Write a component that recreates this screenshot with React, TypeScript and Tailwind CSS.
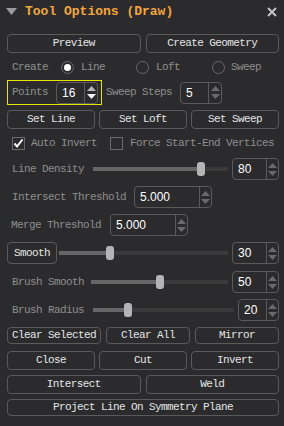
import React from "react";

const mono = "font-['Liberation_Mono','DejaVu_Sans_Mono',monospace] text-[11px] tracking-[-0.6px]";

const Btn = ({ label, className = "" }: { label: string; className?: string }) => (
  <div
    className={`flex items-center justify-center rounded-[4px] border border-[#5a5a5a] text-[#e6e6e6] ${className}`}
  >
    {label}
  </div>
);

const Arrows = ({ w, bright = false }: { w: string; bright?: boolean }) => (
  <div className={`flex h-full flex-col items-center justify-center gap-[3px] border-l border-[#5a5a5a] ${w}`}>
    <svg width="9" height="5" viewBox="0 0 9 5">
      <path d="M0 5 L4.5 0 L9 5 Z" fill={bright ? "#b8b8b8" : "#6a6a6a"} />
    </svg>
    <svg width="9" height="5" viewBox="0 0 9 5">
      <path d="M0 0 L4.5 5 L9 0 Z" fill={bright ? "#f4f4f4" : "#6a6a6a"} />
    </svg>
  </div>
);

const Spin = ({
  value,
  className = "",
  arrowW = "w-[12px]",
  bright = false,
}: {
  value: string;
  className?: string;
  arrowW?: string;
  bright?: boolean;
}) => (
  <div className={`flex h-[22px] items-center rounded-[4px] border border-[#5a5a5a] ${className}`}>
    <div className="flex-1 pl-[5px] font-['Liberation_Sans',sans-serif] text-[12px] tracking-normal text-white">
      {value}
    </div>
    <Arrows w={arrowW} bright={bright} />
  </div>
);

const Slider = ({ pct, className = "" }: { pct: number; className?: string }) => (
  <div className={`relative flex h-[22px] items-center ${className}`}>
    <div className="flex h-[4px] w-full">
      <div className="h-full bg-[#666666]" style={{ width: `${pct}%` }} />
      <div className="h-full flex-1 bg-[#3a3a3a]" />
    </div>
    <div
      className="absolute top-[4px] h-[14px] w-[8px] rounded-[3px] bg-[#b4b4b4]"
      style={{ left: `calc(${pct}% - 4px)` }}
    />
  </div>
);

const Radio = ({ on = false }: { on?: boolean }) => (
  <div className="flex h-[13px] w-[13px] items-center justify-center rounded-full border border-[#6a6a6a]">
    {on && <div className="h-[7px] w-[7px] rounded-full bg-white" />}
  </div>
);

const Check = ({ on = false }: { on?: boolean }) => (
  <div className="flex h-[13px] w-[13px] items-center justify-center border border-[#6a6a6a]">
    {on && (
      <svg width="11" height="11" viewBox="0 0 11 11">
        <path d="M1.5 5.5 L4 8.5 L9.5 1.5" stroke="#ffffff" strokeWidth="2" fill="none" />
      </svg>
    )}
  </div>
);

export default function App() {
  return (
    <div className={`h-[426px] w-[284px] overflow-hidden bg-[#2b2b2d] pl-[7px] pr-[5px] ${mono}`}>
      {/* header */}
      <div className="relative flex h-[24px] items-center">
        <svg width="11" height="8" viewBox="0 0 11 8" className="-ml-[1px]">
          <path d="M0 0 L11 0 L5.5 7 Z" fill="#9c9c9c" />
        </svg>
        <span className="ml-[8px] text-[13px] font-bold tracking-normal text-[#f4a640]">
          Tool Options (Draw)
        </span>
        <svg width="10" height="10" viewBox="0 0 10 10" className="ml-auto mr-[2px]">
          <path d="M1 1 L9 9 M9 1 L1 9" stroke="#c4c4c4" strokeWidth="2" />
        </svg>
      </div>

      <div className="mt-[10px] grid h-[19px] grid-cols-2 gap-[5px]">
        <Btn label="Preview" />
        <Btn label="Create Geometry" />
      </div>

      {/* create */}
      <div className="mt-[7px] flex h-[14px] items-center text-[#8e8e8e]">
        <span className="ml-[5px]">Create</span>
        <div className="ml-[13px]"><Radio on /></div>
        <span className="ml-[7px]">Line</span>
        <div className="ml-[31px]"><Radio /></div>
        <span className="ml-[7px]">Loft</span>
        <div className="ml-[32px]"><Radio /></div>
        <span className="ml-[6px]">Sweep</span>
      </div>

      {/* points */}
      <div className="mt-[6px] flex items-center">
        <div className="flex h-[25px] w-[95px] items-center border border-[#e6e600] pl-[4px] text-[#8e8e8e]">
          <span>Points</span>
          <Spin value="16" className="ml-[8px] h-[21px] w-[42px]" arrowW="w-[13px]" bright />
        </div>
        <span className="ml-[4px] text-[#8e8e8e]">Sweep Steps</span>
        <Spin value="5" className="ml-[8px] h-[21px] w-[42px]" arrowW="w-[13px]" />
      </div>

      <div className="mt-[5px] grid h-[19px] grid-cols-3 gap-[4px]">
        <Btn label="Set Line" />
        <Btn label="Set Loft" />
        <Btn label="Set Sweep" />
      </div>

      {/* checks */}
      <div className="mt-[8px] flex h-[13px] items-center text-[#8e8e8e]">
        <div className="ml-[5px]"><Check on /></div>
        <span className="ml-[6px]">Auto Invert</span>
        <div className="ml-[13px]"><Check /></div>
        <span className="ml-[7px]">Force Start-End Vertices</span>
      </div>

      {/* line density */}
      <div className="mt-[8px] flex items-center text-[#8e8e8e]">
        <span className="w-[86px] pl-[5px]">Line Density</span>
        <Slider pct={80} className="flex-1" />
        <Spin value="80" className="ml-[4px] w-[47px]" />
      </div>

      <div className="mt-[6px] flex items-center text-[#8e8e8e]">
        <span className="w-[127px] pl-[5px]">Intersect Threshold</span>
        <Spin value="5.000" className="w-[78px]" />
      </div>

      <div className="mt-[6px] flex items-center text-[#8e8e8e]">
        <span className="w-[103px] pl-[4px]">Merge Threshold</span>
        <Spin value="5.000" className="w-[78px]" />
      </div>

      <div className="mt-[6px] flex items-center">
        <Btn label="Smooth" className="h-[22px] w-[50px]" />
        <Slider pct={30} className="ml-[2px] flex-1" />
        <Spin value="30" className="ml-[4px] w-[47px]" />
      </div>

      <div className="mt-[7px] flex items-center text-[#8e8e8e]">
        <span className="w-[84px] pl-[5px]">Brush Smooth</span>
        <Slider pct={50} className="flex-1" />
        <Spin value="50" className="ml-[4px] w-[47px]" />
      </div>

      <div className="mt-[6px] flex items-center text-[#8e8e8e]">
        <span className="w-[86px] pl-[5px]">Brush Radius</span>
        <Slider pct={25} className="flex-1" />
        <Spin value="20" className="ml-[4px] w-[41px]" />
      </div>

      <div className="mt-[6px] flex h-[17px] gap-[5px]">
        <Btn label="Clear Selected" className="w-[94px]" />
        <Btn label="Clear All" className="w-[84px]" />
        <Btn label="Mirror" className="flex-1" />
      </div>

      <div className="mt-[7px] grid h-[17px] grid-cols-3 gap-[4px]">
        <Btn label="Close" />
        <Btn label="Cut" />
        <Btn label="Invert" />
      </div>

      <div className="mt-[7px] grid h-[17px] grid-cols-2 gap-[5px]">
        <Btn label="Intersect" />
        <Btn label="Weld" />
      </div>

      <div className="mt-[7px] flex h-[17px]">
        <Btn label="Project Line On Symmetry Plane" className="flex-1" />
      </div>
    </div>
  );
}
